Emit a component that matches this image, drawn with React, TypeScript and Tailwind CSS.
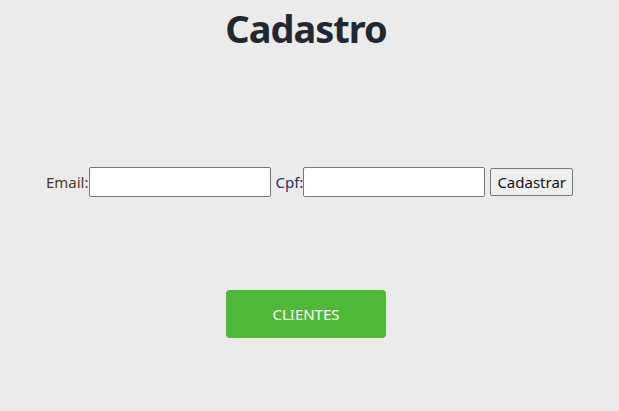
import React from "react";

export default function App() {
  return (
    <div
      className="min-h-[411px] w-full bg-[#ebebeb] flex flex-col items-center"
      style={{ fontFamily: '"Noto Sans", "Open Sans", sans-serif' }}
    >
      <h1 className="mt-[4px] mr-[7px] text-[38px] leading-[48px] font-bold text-[#232830] tracking-[-1px]">
        Cadastro
      </h1>
      <form
        className="mt-[115px] flex items-center text-[15px] text-[#222]"
        onSubmit={(e) => e.preventDefault()}
      >
        <label className="text-[#4a3a24]">Email:</label>
        <input
          type="text"
          className="w-[182px] h-[30px] bg-white border border-[#767676] rounded-[2px] px-1 outline-none"
        />
        <label className="ml-[5px] text-[#23325e]">Cpf:</label>
        <input
          type="text"
          className="w-[182px] h-[30px] bg-white border border-[#767676] rounded-[2px] px-1 outline-none"
        />
        <button
          type="submit"
          className="ml-[5px] h-[28px] px-[6px] bg-[#efefef] border border-[#767676] rounded-[2px] text-[15px] text-[#111]"
        >
          Cadastrar
        </button>
      </form>
      <button className="mt-[93px] mr-[7px] w-[160px] h-[48px] bg-[#4eb936] rounded-[4px] text-white text-[15px]">
        CLIENTES
      </button>
    </div>
  );
}
